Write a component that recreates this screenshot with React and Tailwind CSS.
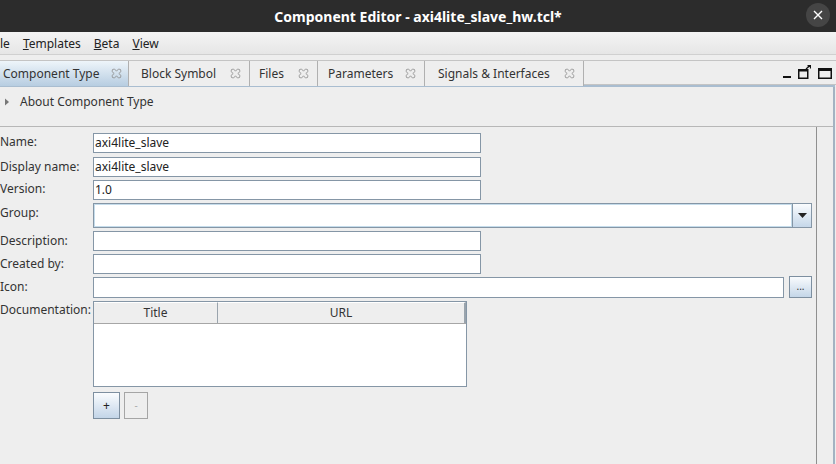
import React from "react";

const TabClose = () => (
  <svg width="11" height="11" viewBox="0 0 11 11" className="shrink-0">
    <path
      d="M1.5 1.5 L3.5 1 L5.5 3.2 L7.5 1 L9.5 1.5 L10 3.5 L7.8 5.5 L10 7.5 L9.5 9.5 L7.5 10 L5.5 7.8 L3.5 10 L1.5 9.5 L1 7.5 L3.2 5.5 L1 3.5 Z"
      fill="none"
      stroke="#8a8a8a"
      strokeWidth="0.8"
    />
  </svg>
);

const Tab = ({ label, selected, w, pl }) => (
  <div
    className={
      "h-[25px] flex items-center justify-between border-r border-[#b0b0b0] text-[12px] text-[#333] " +
      (selected
        ? "bg-gradient-to-b from-[#eef5fa] to-[#b7cde1] pr-[6px]"
        : "bg-[#eeeeee] pr-[8px]")
    }
    style={{ width: w, paddingLeft: pl }}
  >
    <span>{label}</span>
    <TabClose />
  </div>
);

const Field = ({ value, w = "w-[388px]" }) => (
  <div
    className={
      "h-[20px] bg-white border border-[#8596a6] flex items-center px-[1px] text-[12px] text-[#222] " + w
    }
  >
    {value}
  </div>
);

const Label = ({ children, cls = "h-[20px] items-center" }) => (
  <div className={"text-[12px] text-[#333] flex leading-[16px] " + cls}>
    {children}
  </div>
);

export default function App() {
  return (
    <div className="w-[836px] h-[464px] overflow-hidden bg-[#eeeeee] font-['Noto_Sans',sans-serif] flex flex-col">
      {/* Title bar */}
      <div className="h-[32px] bg-[#2c2c2c] relative flex items-center justify-center shrink-0">
        <span className="text-white text-[14px] font-bold">
          Component Editor - axi4lite_slave_hw.tcl*
        </span>
        <div className="absolute right-[6px] top-[3px] w-[24px] h-[24px] rounded-full bg-[#454545] flex items-center justify-center">
          <svg width="10" height="10" viewBox="0 0 10 10">
            <path d="M1 1 L9 9 M9 1 L1 9" stroke="#ffffff" strokeWidth="1.4" />
          </svg>
        </div>
      </div>
      {/* Menu bar */}
      <div className="h-[23px] bg-gradient-to-b from-[#f4f4f4] to-[#e6e6e6] border-b border-[#d0d0d0] flex items-center pt-[2px] text-[12px] text-[#222] shrink-0">
        <span className="ml-0">le</span>
        <span className="ml-[13px]"><span className="underline">T</span>emplates</span>
        <span className="ml-[13px]"><span className="underline">B</span>eta</span>
        <span className="ml-[13px]"><span className="underline">V</span>iew</span>
      </div>
      <div className="h-[5px] shrink-0" />
      {/* Tab row */}
      <div className="h-[25px] border-t border-[#c4c4c4] flex items-stretch shrink-0 relative">
        <div className="flex">
          <Tab label="Component Type" selected w={129} pl={3} />
          <Tab label="Block Symbol" w={121} pl={12} />
          <Tab label="Files" w={68} pl={9} />
          <Tab label="Parameters" w={107} pl={10} />
          <Tab label="Signals & Interfaces" w={159} pl={13} />
        </div>
        <div className="flex-1 border-b border-[#c4c4c4]" />
        <div className="absolute right-[4px] top-[4px] flex items-end gap-[7px]">
          <svg width="8" height="14" viewBox="0 0 8 14">
            <rect x="0" y="11" width="8" height="2" fill="#111" />
          </svg>
          <svg width="13" height="14" viewBox="0 0 13 14">
            <rect x="0.75" y="4.75" width="9" height="8.5" fill="none" stroke="#111" strokeWidth="1.5" />
            <rect x="0" y="4" width="10" height="2.5" fill="#111" />
            <path d="M8 4 L12 0.5 M9.5 0.5 L12.5 0.5 L12.5 3.5" stroke="#111" strokeWidth="1.3" fill="none" />
          </svg>
          <svg width="14" height="11" viewBox="0 0 14 11">
            <rect x="0.75" y="0.75" width="12.5" height="9.5" fill="none" stroke="#111" strokeWidth="1.5" />
            <rect x="0" y="0" width="14" height="3" fill="#111" />
          </svg>
        </div>
      </div>
      {/* Panel */}
      <div className="flex-1 flex border-t-2 border-[#a9bdd0] mr-[1px]">
        <div className="flex-1 flex flex-col border-r-2 border-[#a3b3c2] min-w-0">
          {/* About header */}
          <div className="h-[40px] flex items-start pt-[7px] border-b border-[#b7b7b7] shrink-0">
            <svg width="6" height="8" viewBox="0 0 6 8" className="ml-[4px] mt-[4px]">
              <path d="M1 0.5 L5 4 L1 7.5 Z" fill="#777" />
            </svg>
            <span className="ml-[10px] text-[12px] text-[#333] leading-[16px]">About Component Type</span>
          </div>
          <div className="flex-1 flex">
            <div className="w-[817px] border-r border-[#8f8f8f] pt-[6px]">
              <div className="grid grid-cols-[93px_1fr] gap-y-[3px]">
                <Label cls="h-[20px] items-center pb-[2px]">Name:</Label>
                <Field value="axi4lite_slave" />
                <Label cls="h-[20px] items-center mt-[1px]">Display name:</Label>
                <div className="mt-[1px]"><Field value="axi4lite_slave" /></div>
                <Label cls="h-[20px] items-center pb-[2px]">Version:</Label>
                <Field value="1.0" />
                <Label cls="h-[25px] items-center pb-[6px]">Group:</Label>
                <div className="w-[719px] h-[25px] flex border border-[#8596a6] bg-white">
                  <div className="flex-1 border border-[#c5dceb]" />
                  <div className="w-[19px] border-l border-[#8596a6] bg-gradient-to-b from-[#fafcfe] to-[#c5d7e9] flex items-center justify-center">
                    <svg width="9" height="5" viewBox="0 0 9 5">
                      <path d="M0 0 L9 0 L4.5 5 Z" fill="#222" />
                    </svg>
                  </div>
                </div>
                <Label cls="h-[20px] items-center">Description:</Label>
                <Field value="" />
                <Label cls="h-[20px] items-center">Created by:</Label>
                <Field value="" />
                <div className="col-span-2 flex -mt-[1px]">
                  <div className="w-[93px] h-[22px] flex items-center pb-[1px] text-[12px] text-[#333] leading-[16px]">Icon:</div>
                  <div className="h-[21px] w-[691px] mt-[1px] bg-white border border-[#8596a6]" />
                  <div className="ml-[5px] w-[23px] h-[22px] border border-[#7d8fa0] bg-gradient-to-b from-[#f9fbfd] to-[#c4d6e8] flex items-center justify-center text-[10px] text-[#333] leading-none pb-[2px]">
                    ...
                  </div>
                </div>
                <Label cls="h-[85px] items-start pt-[1px]">Documentation:</Label>
                <div>
                  <div className="w-[374px] h-[86px] border border-[#8596a6] bg-white flex flex-col">
                    <div className="h-[22px] flex bg-[#eeeeee] border-b border-[#a6a6a6] text-[12px] text-[#333]">
                      <div className="w-[124px] border-r border-[#9aa4ad] border-t border-t-white flex items-center justify-center">Title</div>
                      <div className="flex-1 border-r-2 border-[#9aa4ad] border-t border-t-white flex items-center justify-center">URL</div>
                    </div>
                    <div className="flex-1 bg-white" />
                  </div>
                  <div className="flex gap-[4px] mt-[5px]">
                    <div className="w-[27px] h-[27px] border border-[#7d8fa0] bg-gradient-to-b from-[#fafcfe] to-[#c3d5e8] flex items-center justify-center text-[12px] text-[#222]">+</div>
                    <div className="w-[24px] h-[27px] border border-[#a5a5a5] flex items-center justify-center text-[10px] text-[#aaa]">-</div>
                  </div>
                </div>
              </div>
            </div>
            <div className="flex-1" />
          </div>
        </div>
      </div>
    </div>
  );
}
